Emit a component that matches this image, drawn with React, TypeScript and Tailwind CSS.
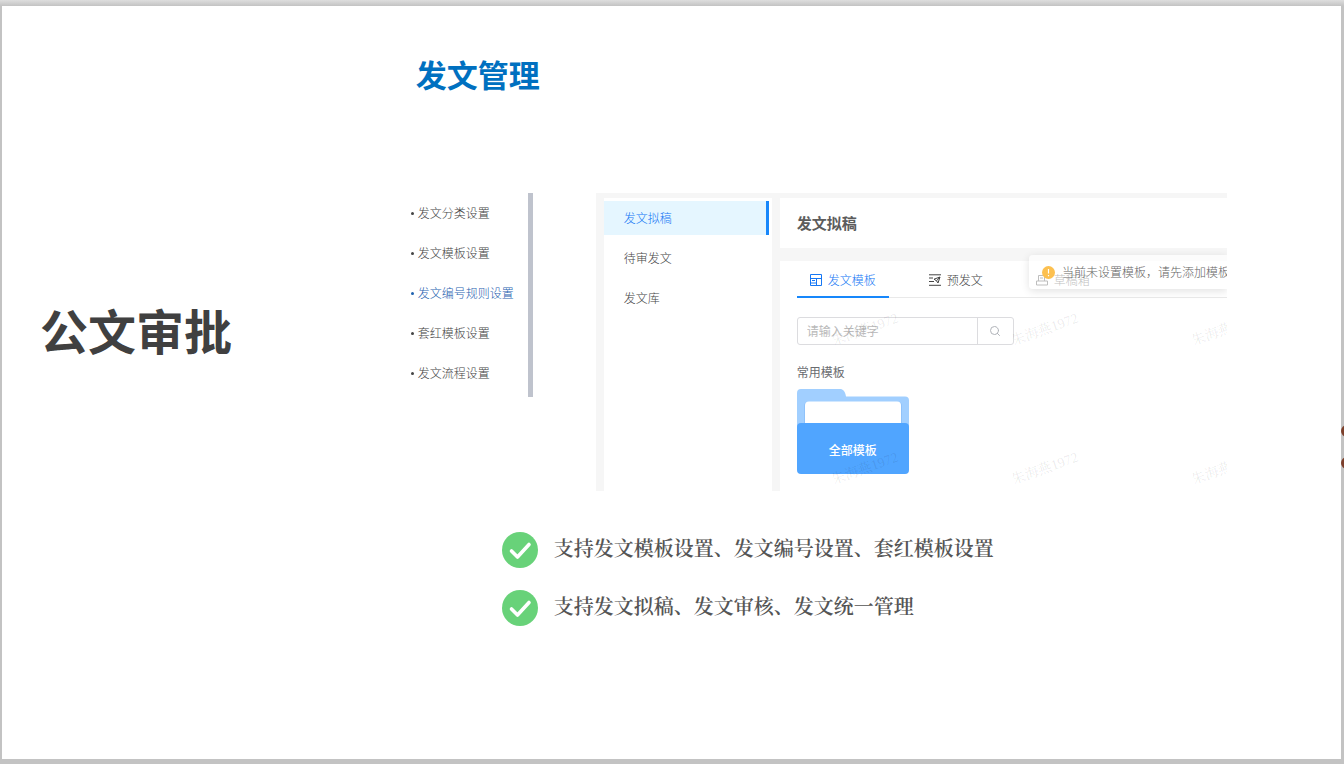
import { useState } from "react";
import { Search } from "lucide-react";

const settings = [
  "发文分类设置",
  "发文模板设置",
  "发文编号规则设置",
  "套红模板设置",
  "发文流程设置",
];

const menu = ["发文拟稿", "待审发文", "发文库"];

const features = [
  "支持发文模板设置、发文编号设置、套红模板设置",
  "支持发文拟稿、发文审核、发文统一管理",
];

const watermarks = [
  "left-[234px] top-[127px]",
  "left-[414px] top-[127px]",
  "left-[594px] top-[127px]",
  "left-[234px] top-[266px]",
  "left-[414px] top-[266px]",
  "left-[594px] top-[266px]",
];

function TemplateIcon() {
  return (
    <svg className="size-3 shrink-0" viewBox="0 0 12 12" fill="none" stroke="currentColor">
      <path d="M0.5 0.5h11v11h-11zM0.5 4.5h11M6.5 4.5v7M0.5 9h6M2 6.500h3" />
    </svg>
  );
}

function SendIcon() {
  return (
    <svg className="size-3 shrink-0" viewBox="0 0 12 12" fill="none" stroke="currentColor">
      <path d="M0 0.8h12M0 4h4M0 7.5h5M0 11.3h12" />
      <path d="M5 5.2 11 3 9 9 7.5 6.8zM7.5 6.8 11 3" />
    </svg>
  );
}

function DraftIcon() {
  return (
    <svg className="size-3 shrink-0" viewBox="0 0 12 12" fill="none" stroke="currentColor">
      <path d="M2.5 7V1.5h6V7M4 4h3M0.5 7h11v4h-11z" />
    </svg>
  );
}

const tabs = [
  { label: "发文模板", Icon: TemplateIcon },
  { label: "预发文", Icon: SendIcon },
  { label: "草稿箱", Icon: DraftIcon },
];

function SettingsList() {
  return (
    <nav className="w-32 shrink-0 self-start border-r-[5px] border-[#bfc3cd] pb-1">
      <ul>
        {settings.map((item) => (
          <li key={item}>
            <a
              href="#"
              className={`flex h-10 items-center gap-1 whitespace-nowrap pl-1.5 text-xs font-light ${
                item === "发文编号规则设置" ? "text-[#1f62b0]" : "text-[#444]"
              }`}
            >
              <span className="size-[3px] rounded-full bg-current" />
              {item}
            </a>
          </li>
        ))}
      </ul>
    </nav>
  );
}

function Folder() {
  return (
    <button className="relative mt-2 block h-[85px] w-28 pt-9 text-xs font-medium text-white">
      <svg className="absolute inset-0" width="112" height="85" viewBox="0 0 112 85">
        <path
          d="M0 4a4 4 0 0 1 4-4h39c3 0 5 2 6 7.500h59a4 4 0 0 1 4 4V60H0z"
          fill="#a1cfff"
        />
        <rect x="7" y="13" width="98" height="40" rx="4" fill="#8fc2fa" />
        <rect x="8" y="12.500" width="96" height="40" rx="4" fill="#fff" />
        <rect y="34" width="112" height="51" rx="4" fill="#50a5ff" />
      </svg>
      <span className="relative">全部模板</span>
    </button>
  );
}

function Workspace() {
  const [page, setPage] = useState("发文拟稿");
  const [tab, setTab] = useState("发文模板");

  return (
    <div className="relative flex min-w-0 flex-1 gap-2 overflow-hidden bg-[#f6f6f6] pl-2 pt-[5px]">
      <div className="flex w-42 shrink-0 flex-col gap-1.5 bg-white pr-[3px] pt-[3px]">
        {menu.map((item) => (
          <button
            key={item}
            onClick={() => setPage(item)}
            className={`h-[34px] border-r-[3px] pl-5 text-left text-xs font-light ${
              item === page
                ? "border-[#1787fb] bg-[#e5f6ff] text-[#1577f5]"
                : "border-transparent text-[#444]"
            }`}
          >
            {item}
          </button>
        ))}
      </div>

      <div className="flex min-w-0 flex-1 flex-col gap-[13px]">
        <h3 className="flex h-[50px] items-center bg-white px-[17px] text-[15px] font-bold text-[#5c5c5c]">
          发文拟稿
        </h3>
        <div className="bg-white pb-[17px] pl-[17px]">
          <div className="flex h-[37px] gap-[27px] border-b border-[#e9e9e9]">
            {tabs.map(({ label, Icon }) => (
              <button
                key={label}
                onClick={() => setTab(label)}
                className={`-mb-px flex shrink-0 items-center gap-1.5 border-b-2 px-[13px] pt-0.5 text-xs font-light ${
                  label === tab
                    ? "border-[#1787fb] text-[#1577f5]"
                    : "border-transparent text-[#444]"
                }`}
              >
                <Icon />
                {label}
              </button>
            ))}
          </div>
          <form className="mt-[19px] flex h-7 w-[217px] rounded-[3px] border border-[#dcdcdf]">
            <input
              type="text"
              aria-label="关键字"
              placeholder="请输入关键字"
              className="min-w-0 flex-1 px-[9px] text-xs outline-none placeholder:text-[#b9b9b9]"
            />
            <button
              type="button"
              aria-label="搜索"
              className="flex w-9 items-center justify-center border-l border-[#dcdcdf] text-[#b0b3b9]"
            >
              <Search size={12} />
            </button>
          </form>
          <h4 className="mt-[18px] text-xs leading-[18px] text-[#6a6c70]">常用模板</h4>
          <Folder />
        </div>
      </div>

      <div
        role="status"
        className="absolute right-0 top-[62px] flex h-[34px] w-[198px] items-center gap-[7px] overflow-hidden whitespace-nowrap rounded-l bg-white/65 pl-[13px] text-xs font-light text-[#666] shadow-[0_2px_8px_rgba(0,0,0,0.12)]"
      >
        <svg className="shrink-0" width="13" height="13" viewBox="0 0 13 13">
          <circle cx="6.500" cy="6.500" r="6.500" fill="#fcc050" />
          <path d="M6.500 3v4.500M6.500 9v1.200" stroke="#fff" strokeWidth="1.200" />
        </svg>
        当前未设置模板，请先添加模板
      </div>

      {watermarks.map((position) => (
        <span
          key={position}
          className={`pointer-events-none absolute -rotate-20 whitespace-nowrap font-['Liberation_Serif','Noto_Serif_CJK_SC',serif] text-sm text-black/9 ${position}`}
        >
          朱海燕1972
        </span>
      ))}
    </div>
  );
}

export default function App() {
  return (
    <div className="relative flex min-h-screen overflow-hidden bg-[#c3c3c3] bg-linear-to-b from-[#dedede] to-[#c3c3c3] to-[6px] pb-[5px] pl-0.5 pr-[3px] pt-1.5 font-['Noto_Sans_CJK_SC',sans-serif]">
      <main className="grid flex-1 grid-cols-[3fr_7fr] bg-white">
        <h1 className="pl-[38px] pt-[295px] text-5xl leading-[56px] font-bold text-[#404040]">
          公文审批
        </h1>
        <section className="min-w-0 pl-px pr-[114px] pt-12">
          <h2 className="pl-[11px] text-[31px] leading-10 font-bold text-[#0070c0]">发文管理</h2>
          <div className="mt-[99px] flex gap-[63px]">
            <SettingsList />
            <Workspace />
          </div>
          <ul className="mt-[41px] flex flex-col gap-[22px] pl-[97px]">
            {features.map((text) => (
              <li
                key={text}
                className="flex items-start gap-4 font-['Noto_Serif_CJK_SC',serif] text-xl leading-8 font-semibold text-[#555]"
              >
                <svg className="shrink-0" width="36" height="36" viewBox="0 0 36 36">
                  <circle cx="18" cy="18" r="18" fill="#68d279" />
                  <path
                    d="M9.500 19 15.500 25 27 12.500"
                    fill="none"
                    stroke="#fff"
                    strokeWidth="3.600"
                    strokeLinecap="round"
                    strokeLinejoin="round"
                  />
                </svg>
                <span>{text}</span>
              </li>
            ))}
          </ul>
        </section>
      </main>
      <span className="absolute -right-[9px] top-[425px] size-3 rounded-full bg-[#7c3f2b]" />
      <span className="absolute -right-[9px] top-[457px] size-3 rounded-full bg-[#7c3f2b]" />
    </div>
  );
}
